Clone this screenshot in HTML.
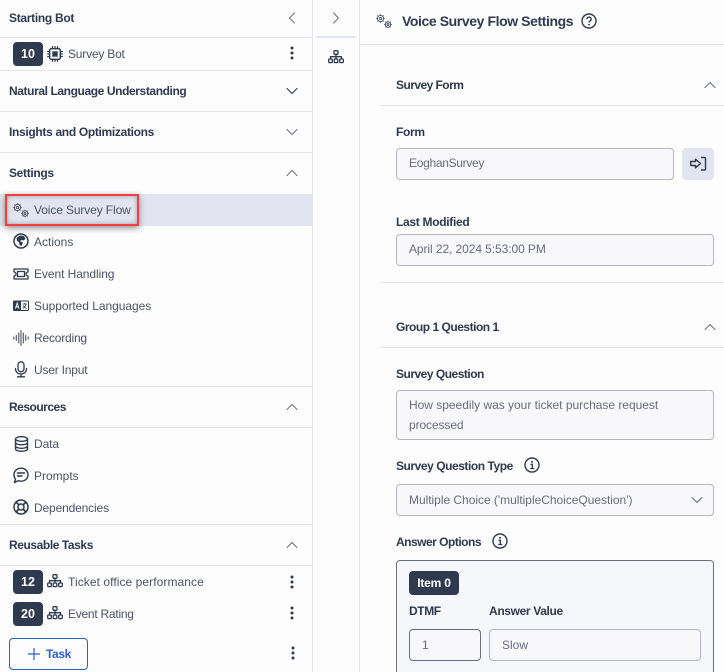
<!DOCTYPE html>
<html lang="en"><head><meta charset="utf-8"><title>Voice Survey Flow Settings</title>
<style>
html,body{margin:0;padding:0;width:724px;height:672px;overflow:hidden;background:#fdfdfe;font-family:"Liberation Sans",Arial,sans-serif;color:#2f3a4f}
div,span,svg{position:absolute;box-sizing:border-box}
#p{left:0;top:0;width:724px;height:672px;overflow:hidden;background:#fdfdfe}
.t{white-space:nowrap;line-height:16px;font-size:12px;color:#4a5263}
.b{font-weight:bold;color:#2f3a4f}
.hl{background:#e2e5ef}
.badge{background:#2f3a4f;color:#fff;border-radius:4px;font-weight:bold;font-size:12.5px;text-align:center;line-height:24px;width:30px;height:24px;left:13px}
.in{background:#f8f8fa;border:1px solid #b3b6c2;border-radius:4px}
.v{color:#666c7c}
svg{overflow:visible}
.i{fill:none;stroke:#2f3a4f;stroke-width:1.3;stroke-linecap:round;stroke-linejoin:round}
</style></head><body>

<svg width="0" height="0" style="position:absolute"><defs>
<g id="gears" fill="none" stroke="#4a5263" stroke-width=".9" stroke-linecap="round">
<circle cx="4.500" cy="4.500" r="3.100"/><circle cx="4.500" cy="4.500" r="1.200"/><path d="M4.500.6v.8M4.500 7.600v.8M.6 4.500h.8M7.600 4.500h.8M1.700 1.700l.6.6M6.700 6.700l.6.6M1.700 7.300l.6-.6M6.700 2.300l.6-.6"/>
<circle cx="12" cy="10.500" r="2.700"/><circle cx="12" cy="10.500" r="1"/><path d="M12 7v.8M12 13.200v.8M8.500 10.500h.8M14.700 10.500h.8M9.500 8l.6.6M13.900 12.400l.6.6M9.500 13l.6-.6M13.900 8.600l.6-.6"/>
</g>
<g id="tree" class="i">
<rect x="6" y=".7" width="4" height="3.600" rx=".8"/><rect x=".7" y="9" width="3.600" height="3.600" rx=".8"/><rect x="6.200" y="9" width="3.600" height="3.600" rx=".8"/><rect x="11.700" y="9" width="3.600" height="3.600" rx=".8"/>
<path d="M8 4.300V9M2.500 9V6.700h11V9"/>
</g>
<g id="kebab"><circle cx="2" cy="2" r="1.500" fill="#2f3a4f"/><circle cx="2" cy="7" r="1.500" fill="#2f3a4f"/><circle cx="2" cy="12" r="1.500" fill="#2f3a4f"/></g>
<path id="up" d="M1 6.500 6 1.500l5 5" fill="none" stroke="#6d7484" stroke-width="1.100" stroke-linecap="round" stroke-linejoin="round"/>
<path id="down" d="M1 1.500 6 6.500l5-5" fill="none" stroke="#3c4557" stroke-width="1.200" stroke-linecap="round" stroke-linejoin="round"/>
<path id="downl" d="M1 1.500 6 6.500l5-5" fill="none" stroke="#6d7484" stroke-width="1.100" stroke-linecap="round" stroke-linejoin="round"/>
</defs></svg>

<div id="p">
<!-- Left panel -->
<div class="hl" style="left:0;top:194px;width:312px;height:32px"></div>
<div style="left:312px;top:0;width:1px;height:672px;background:#e2e5ef"></div>
<div style="left:0;top:37px;width:312px;height:1px;background:#e2e5ef"></div>
<div style="left:0;top:70px;width:312px;height:1px;background:#e2e5ef"></div>
<div style="left:0;top:111px;width:312px;height:1px;background:#e2e5ef"></div>
<div style="left:0;top:152px;width:312px;height:1px;background:#e2e5ef"></div>
<div style="left:0;top:386px;width:312px;height:1px;background:#e2e5ef"></div>
<div style="left:0;top:427px;width:312px;height:1px;background:#e2e5ef"></div>
<div style="left:0;top:524px;width:312px;height:1px;background:#e2e5ef"></div>
<div style="left:0;top:565px;width:312px;height:1px;background:#e2e5ef"></div>

<div class="t b" style="left:9px;top:10px;letter-spacing:-.3px">Starting Bot</div>
<svg style="left:288px;top:12px" width="8" height="12"><path d="M6.500 1 1.500 6l5 5" fill="none" stroke="#6d7484" stroke-width="1.100" stroke-linecap="round" stroke-linejoin="round"/></svg>
<div class="badge" style="top:42px">10</div>
<svg style="left:47px;top:46px" width="16" height="16"><rect x="2.700" y="2.700" width="10.600" height="10.600" rx="1.500" fill="none" stroke="#2f3a4f" stroke-width="1.400"/><rect x="5.300" y="5.300" width="5.400" height="5.400" fill="#2f3a4f"/><path d="M5.500.7v2M8 .7v2M10.500.7v2M5.500 13.300v2M8 13.300v2M10.500 13.300v2M.7 5.500h2M.7 8h2M.7 10.500h2M13.300 5.500h2M13.300 8h2M13.300 10.500h2" fill="none" stroke="#2f3a4f" stroke-width="1.300" stroke-linecap="round"/></svg>
<div class="t" style="left:68px;top:46px;letter-spacing:-.2px">Survey Bot</div>
<svg style="left:290px;top:46px" width="4" height="14"><use href="#kebab"/></svg>

<div class="t b" style="left:9px;top:83px;letter-spacing:-.4px">Natural Language Understanding</div>
<svg style="left:286px;top:87px" width="12" height="8"><use href="#down"/></svg>
<div class="t b" style="left:9px;top:124px;letter-spacing:-.32px">Insights and Optimizations</div>
<svg style="left:286px;top:128px" width="12" height="8"><use href="#downl"/></svg>
<div class="t b" style="left:9px;top:165px;letter-spacing:-.32px">Settings</div>
<svg style="left:286px;top:169px" width="12" height="8"><use href="#up"/></svg>

<div style="left:5px;top:194px;width:134px;height:32px;border:2px solid #f2403f;box-shadow:0 2px 6px rgba(50,50,60,.55), inset 0 0 5px rgba(50,50,60,.4)"></div>
<svg style="left:13px;top:203px" width="16" height="16"><use href="#gears"/></svg>
<div class="t" style="left:34px;top:202px;letter-spacing:-.12px">Voice Survey Flow</div>

<svg style="left:13px;top:233px" width="16" height="16"><circle cx="8" cy="8" r="7" fill="none" stroke="#2f3a4f" stroke-width="1.500"/><path d="M3.500 5 7 2.500l4 .5 1.500 3-2 1.500-2-.5-1.500 1 3 1.500-1.500 3.500-2-1-.5-3-2-1z" fill="#2f3a4f"/></svg>
<div class="t" style="left:34px;top:234px">Actions</div>
<svg style="left:13px;top:266px" width="16" height="16" class="i"><path d="M1 3h14v3a2 2 0 0 0 0 4v3H1v-3a2 2 0 0 0 0-4z"/><rect x="4.500" y="5.500" width="7" height="5"/></svg>
<div class="t" style="left:34px;top:266px;letter-spacing:-.07px">Event Handling</div>
<svg style="left:13px;top:298px" width="16" height="16"><rect x=".5" y="3" width="15" height="9.500" rx="1" fill="#fff" stroke="#2f3a4f"/><rect x=".5" y="3" width="7.500" height="9.500" rx="1" fill="#2f3a4f"/><path d="M2.400 10.600 4.200 5l1.800 5.600M3 9h2.400" stroke="#fff" fill="none" stroke-width=".9"/><path d="M9.500 6h4.500M11.700 5v1M13 6c-.4 2-1.600 3.500-3.300 4.400M10.300 7.500c.6 1.300 1.800 2.400 3.300 3" stroke="#2f3a4f" fill="none" stroke-width=".8"/></svg>
<div class="t" style="left:34px;top:298px;letter-spacing:-.05px">Supported Languages</div>
<svg style="left:13px;top:329px" width="16" height="18" fill="none" stroke="#4a5263" stroke-width="1.100" stroke-linecap="round"><path d="M.8 8v2M3.300 6.500v5M5.800 4v10M8 1.500v15M10.300 4v10M12.700 6.500v5M15.200 8v2"/></svg>
<div class="t" style="left:34px;top:330px;letter-spacing:-.2px">Recording</div>
<svg style="left:13px;top:361px" width="16" height="17" class="i" style="stroke-width:1.400"><rect x="5" y=".8" width="6" height="10" rx="3"/><path d="M2.500 7.500c0 3.500 2.500 5.500 5.500 5.500s5.500-2 5.500-5.500M8 13v2.800M4.500 15.800h7"/></svg>
<div class="t" style="left:34px;top:362px;letter-spacing:-.2px">User Input</div>

<div class="t b" style="left:9px;top:399px;letter-spacing:-.5px">Resources</div>
<svg style="left:286px;top:403px" width="12" height="8"><use href="#up"/></svg>
<svg style="left:14px;top:436px" width="15" height="16" fill="none" stroke="#2f3a4f" stroke-width="1.400"><ellipse cx="7.500" cy="3" rx="6" ry="2.300"/><path d="M1.500 3v10c0 1.300 2.700 2.300 6 2.300s6-1 6-2.300V3M1.500 6.500c0 1.300 2.700 2.300 6 2.300s6-1 6-2.300M1.500 10c0 1.300 2.700 2.300 6 2.300s6-1 6-2.300"/></svg>
<div class="t" style="left:34px;top:436px;letter-spacing:-.1px">Data</div>
<svg style="left:13px;top:467px" width="16" height="17" fill="none" stroke="#2f3a4f" stroke-width="1.400" stroke-linecap="round" stroke-linejoin="round"><path d="M8 1.200c4 0 7 2.800 7 6.500s-3 6.500-7 6.500c-1 0-2-.2-2.900-.5L1.500 15.500l1-3.300C1.500 11 1 9.500 1 7.700 1 4 4 1.200 8 1.200z"/><path d="M4.500 6h7M4.500 9H9"/></svg>
<div class="t" style="left:34px;top:468px">Prompts</div>
<svg style="left:13px;top:499px" width="16" height="16" fill="none" stroke="#2f3a4f" stroke-width="1.500"><circle cx="8" cy="8" r="7"/><circle cx="8" cy="8" r="3"/><path d="M3 3l3 3M13 3l-3 3M3 13l3-3M13 13l-3-3" stroke-width="1.800"/></svg>
<div class="t" style="left:34px;top:500px;letter-spacing:-.15px">Dependencies</div>

<div class="t b" style="left:9px;top:537px;letter-spacing:-.42px">Reusable Tasks</div>
<svg style="left:286px;top:541px" width="12" height="8"><use href="#up"/></svg>
<div class="badge" style="top:570px">12</div>
<svg style="left:47px;top:574px" width="16" height="14"><use href="#tree"/></svg>
<div class="t" style="left:68px;top:574px;letter-spacing:.07px">Ticket office performance</div>
<svg style="left:290px;top:575px" width="4" height="14"><use href="#kebab"/></svg>
<div class="badge" style="top:602px">20</div>
<svg style="left:47px;top:606px" width="16" height="14"><use href="#tree"/></svg>
<div class="t" style="left:68px;top:606px;letter-spacing:-.25px">Event Rating</div>
<svg style="left:290px;top:606px" width="4" height="14"><use href="#kebab"/></svg>
<div style="left:9px;top:638px;width:79px;height:32px;border:1px solid #2f5fc4;border-radius:4px;background:#fdfdfe"></div>
<svg style="left:28px;top:648px" width="12" height="12"><path d="M6 0v12M0 6h12" stroke="#2f5fc4" stroke-width="1.200"/></svg>
<div class="t" style="left:46px;top:646px;font-weight:bold;color:#2f5fc4;letter-spacing:-.4px">Task</div>
<svg style="left:291px;top:646px" width="4" height="14"><use href="#kebab"/></svg>

<!-- Middle rail -->
<div style="left:359px;top:0;width:1px;height:672px;background:#e2e5ef"></div>
<svg style="left:332px;top:12px" width="8" height="12"><path d="M1.500 1l5 5-5 5" fill="none" stroke="#6d7484" stroke-width="1.100" stroke-linecap="round" stroke-linejoin="round"/></svg>
<div style="left:316px;top:36px;width:40px;height:2px;background:#e2e5ef"></div>
<svg style="left:328px;top:50px" width="16" height="14"><use href="#tree"/></svg>

<!-- Right panel -->
<div style="left:360px;top:44px;width:364px;height:1px;background:#e2e5ef"></div>
<svg style="left:376px;top:14px" width="16" height="16"><use href="#gears"/></svg>
<div class="t b" style="left:402px;top:12px;font-size:14px;line-height:18px;letter-spacing:-.41px">Voice Survey Flow Settings</div>
<svg style="left:581px;top:13px" width="16" height="16"><circle cx="8" cy="8" r="7" fill="none" stroke="#2f3a4f" stroke-width="1.400"/><path d="M5.800 6.300C5.800 5 6.800 4.200 8 4.200s2.200.8 2.200 2c0 1.700-2.200 1.700-2.200 3.300" fill="none" stroke="#2f3a4f" stroke-width="1.400"/><circle cx="8" cy="11.700" r=".9" fill="#2f3a4f"/></svg>

<div class="t b" style="left:396px;top:77px;letter-spacing:-.55px">Survey Form</div>
<svg style="left:704px;top:81px" width="12" height="8"><use href="#up"/></svg>
<div style="left:380px;top:105px;width:344px;height:1px;background:#e2e5ef"></div>
<div class="t b" style="left:396px;top:124px;letter-spacing:-.3px">Form</div>
<div class="in" style="left:396px;top:148px;width:278px;height:32px"></div>
<div class="t v" style="left:409px;top:155px;letter-spacing:-.3px">EoghanSurvey</div>
<div style="left:682px;top:148px;width:32px;height:32px;background:#e2e5ef;border-radius:4px"></div>
<svg style="left:690px;top:156px" width="16" height="16" fill="none" stroke="#2f3a4f" stroke-width="1.400" stroke-linejoin="round" stroke-linecap="round"><path d="M.7 5.500h4.800V3.200l5 4.300-5 4.300V9.500H.7z"/><path d="M11.500 1.500h3a1 1 0 0 1 1 1v10.500a1 1 0 0 1-1 1h-3"/></svg>

<div class="t b" style="left:396px;top:214px;letter-spacing:-.3px">Last Modified</div>
<div class="in" style="left:396px;top:234px;width:318px;height:32px"></div>
<div class="t v" style="left:409px;top:241px;letter-spacing:-.08px">April 22, 2024 5:53:00 PM</div>
<div style="left:380px;top:282px;width:344px;height:1px;background:#e2e5ef"></div>

<div class="t b" style="left:396px;top:319px;letter-spacing:-.48px">Group 1 Question 1</div>
<svg style="left:704px;top:323px" width="12" height="8"><use href="#up"/></svg>
<div style="left:380px;top:347px;width:344px;height:1px;background:#e2e5ef"></div>

<div class="t b" style="left:396px;top:366px;letter-spacing:-.5px">Survey Question</div>
<div class="in" style="left:396px;top:390px;width:318px;height:50px"></div>
<div class="t v" style="left:409px;top:397px;letter-spacing:-.02px">How speedily was your ticket purchase request</div>
<div class="t v" style="left:409px;top:417px;letter-spacing:-.1px">processed</div>

<div class="t b" style="left:396px;top:458px;letter-spacing:-.45px">Survey Question Type</div>
<svg style="left:524px;top:457px" width="16" height="16"><circle cx="8" cy="8" r="7" fill="none" stroke="#2f3a4f" stroke-width="1.400"/><circle cx="8" cy="4.700" r="1" fill="#2f3a4f"/><path d="M6.500 7.300H8.300V11.500M6.300 11.500h4" fill="none" stroke="#2f3a4f" stroke-width="1.300"/></svg>
<div class="in" style="left:396px;top:484px;width:318px;height:32px"></div>
<div class="t v" style="left:409px;top:492px;letter-spacing:-.03px">Multiple Choice ('multipleChoiceQuestion')</div>
<svg style="left:691px;top:496px" width="12" height="8"><use href="#downl"/></svg>

<div class="t b" style="left:396px;top:534px;letter-spacing:-.5px">Answer Options</div>
<svg style="left:492px;top:533px" width="16" height="16"><circle cx="8" cy="8" r="7" fill="none" stroke="#2f3a4f" stroke-width="1.400"/><circle cx="8" cy="4.700" r="1" fill="#2f3a4f"/><path d="M6.500 7.300H8.300V11.500M6.300 11.500h4" fill="none" stroke="#2f3a4f" stroke-width="1.300"/></svg>

<div style="left:396px;top:560px;width:318px;height:130px;background:#f6f7fa;border:1px solid #6a7080;border-radius:4px"></div>
<div style="left:409px;top:571px;width:50px;height:24px;background:#2f3a4f;border-radius:4px;color:#fff;font-weight:bold;font-size:12px;line-height:24px;text-align:center;letter-spacing:-.2px">Item 0</div>
<div class="t b" style="left:409px;top:603px;letter-spacing:-.4px">DTMF</div>
<div class="t b" style="left:489px;top:603px;letter-spacing:-.35px">Answer Value</div>
<div class="in" style="left:409px;top:629px;width:72px;height:32px;border-color:#6a7080"></div>
<div class="t v" style="left:422px;top:637px">1</div>
<div class="in" style="left:489px;top:629px;width:212px;height:32px"></div>
<div class="t v" style="left:502px;top:637px">Slow</div>
</div>
</body></html>
